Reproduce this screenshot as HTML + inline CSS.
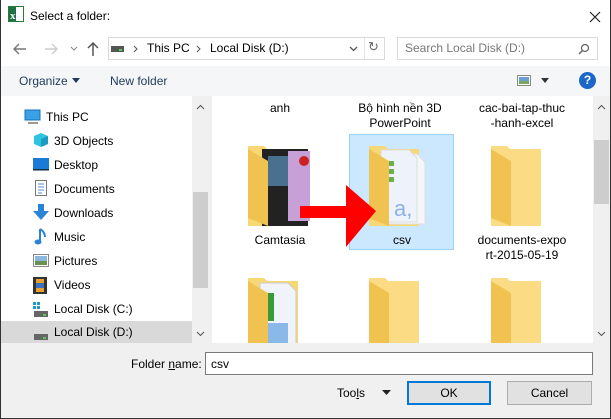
<!DOCTYPE html>
<html><head><meta charset="utf-8"><style>
*{margin:0;padding:0;box-sizing:border-box}
body{width:611px;height:419px;overflow:hidden;background:#fff;font-family:"Liberation Sans","Noto Sans CJK JP",sans-serif;font-size:12px;color:#000;position:relative}
.a{position:absolute}
.nav div.it{position:absolute;left:54px;height:24px;line-height:24px;font-size:12px}
.ic{position:absolute;left:33px}
.lbl{position:absolute;text-align:center;font-size:12px;line-height:15px;width:110px}
</style></head><body>
<div class="a" style="left:0;top:0;width:1px;height:419px;background:#333"></div>
<div class="a" style="right:0;top:0;width:1px;height:419px;background:#333"></div>
<!-- title -->
<svg class="a" style="left:8px;top:6px" width="16" height="16"><rect x="0.5" y="0.5" width="15" height="15" fill="#fff" stroke="#2a7a3a"/><rect x="1" y="1" width="7" height="14" fill="#1e7145"/><text x="2" y="13" font-size="11" font-weight="bold" fill="#fff" font-family="Liberation Serif">x</text></svg>
<div class="a" style="left:30px;top:9px;font-size:12px">Select a folder:</div>
<svg class="a" style="left:589px;top:11px" width="12" height="12"><path d="M1 1L11 11M11 1L1 11" stroke="#222" stroke-width="1.2"/></svg>
<!-- nav -->
<svg class="a" style="left:13px;top:43px" width="14" height="12"><path d="M13 6H2M6 1L1 6l5 5" stroke="#777" stroke-width="1.4" fill="none"/></svg>
<svg class="a" style="left:44px;top:43px" width="14" height="12"><path d="M1 6h11M8 1l5 5-5 5" stroke="#ccc" stroke-width="1.4" fill="none"/></svg>
<svg class="a" style="left:70px;top:46px" width="8" height="6"><path d="M1 1l3 3 3-3" stroke="#888" fill="none"/></svg>
<svg class="a" style="left:87px;top:41px" width="12" height="15"><path d="M6 15V2M1 7l5-5 5 5" stroke="#555" stroke-width="1.5" fill="none"/></svg>
<div class="a" style="left:108px;top:37px;width:277px;height:23px;border:1px solid #d9d9d9"></div>
<div class="a" style="left:364px;top:38px;width:1px;height:21px;background:#e5e5e5"></div>
<svg class="a" style="left:111px;top:43px" width="14" height="10"><rect x="0" y="3" width="13" height="6" fill="#555"/><rect x="8" y="6" width="3" height="2" fill="#5c5"/></svg>
<svg class="a" style="left:133px;top:45px" width="5" height="8"><path d="M1 1l3 3-3 3" stroke="#555" fill="none"/></svg>
<div class="a" style="left:147px;top:41px;font-size:12px">This PC</div>
<svg class="a" style="left:196px;top:45px" width="5" height="8"><path d="M1 1l3 3-3 3" stroke="#555" fill="none"/></svg>
<div class="a" style="left:210px;top:41px;font-size:12px">Local Disk (D:)</div>
<svg class="a" style="left:349px;top:46px" width="9" height="6"><path d="M1 1l3.5 3.5L8 1" stroke="#555" stroke-width="1.3" fill="none"/></svg>
<div class="a" style="left:368px;top:39px;font-size:13px;color:#666">↻</div>
<div class="a" style="left:397px;top:37px;width:201px;height:23px;border:1px solid #d9d9d9"></div>
<div class="a" style="left:405px;top:41px;font-size:12px;color:#777">Search Local Disk (D:)</div>
<svg class="a" style="left:578px;top:43px" width="12" height="12"><circle cx="7" cy="5" r="3.5" fill="none" stroke="#666" stroke-width="1.3"/><line x1="4.5" y1="7.5" x2="1" y2="11" stroke="#666" stroke-width="1.5"/></svg>
<!-- toolbar -->
<div class="a" style="left:1px;top:66px;width:609px;height:30px;background:#f5f6f7"></div>
<div class="a" style="left:19px;top:74px;font-size:12px;color:#1e395b">Organize</div>
<svg class="a" style="left:72px;top:78px" width="8" height="5"><path d="M0 0h8L4 5z" fill="#1e395b"/></svg>
<div class="a" style="left:110px;top:74px;font-size:12px;color:#1e395b">New folder</div>
<svg class="a" style="left:517px;top:75px" width="14" height="11"><rect x="0.5" y="0.5" width="13" height="10" fill="#fff" stroke="#888"/><rect x="2" y="2" width="10" height="7" fill="#6a9ed4"/><rect x="2" y="6" width="10" height="3" fill="#7aa860"/></svg>
<svg class="a" style="left:541px;top:78px" width="8" height="5"><path d="M0 0h8L4 5z" fill="#333"/></svg>
<div class="a" style="left:579px;top:72px;width:17px;height:17px;border-radius:50%;background:#1b66c7;color:#fff;font-weight:bold;font-size:12px;text-align:center;line-height:17px">?</div>
<!-- left pane -->
<div class="nav">
<div class="a" style="left:1px;top:321px;width:191px;height:22px;background:#d9d9d9"></div>
<div class="it" style="left:46px;top:105px">This PC</div>
<div class="it" style="top:129px">3D Objects</div>
<div class="it" style="top:153px">Desktop</div>
<div class="it" style="top:177px">Documents</div>
<div class="it" style="top:201px">Downloads</div>
<div class="it" style="top:225px">Music</div>
<div class="it" style="top:249px">Pictures</div>
<div class="it" style="top:273px">Videos</div>
<div class="it" style="top:297px">Local Disk (C:)</div>
<div class="it" style="top:320px">Local Disk (D:)</div>
</div>
<svg class="a" style="left:24px;top:109px" width="18" height="16"><rect x="1" y="1" width="15" height="10" fill="#3aa0e8" stroke="#1a70b8"/><rect x="4" y="13" width="10" height="2" fill="#999"/></svg>
<svg class="ic" style="top:132px" width="16" height="16"><polygon points="8,1 15,4 15,12 8,15 1,12 1,4" fill="#2ec4e0"/><polygon points="8,7 15,4 15,12 8,15" fill="#1a9cc0"/></svg>
<svg class="ic" style="top:157px" width="16" height="14"><rect x="0" y="1" width="16" height="11" fill="#1a7ad8"/><rect x="0" y="12" width="16" height="1.5" fill="#134"/></svg>
<svg class="ic" style="top:180px" width="16" height="18"><rect x="2.5" y="0.5" width="11" height="15" fill="#fff" stroke="#777"/><path d="M5 4h6M5 7h6M5 10h6M5 13h4" stroke="#5a8ad0"/></svg>
<svg class="ic" style="top:204px" width="16" height="18"><rect x="5" y="0" width="6" height="8" fill="#2b83d8"/><polygon points="0,7 16,7 8,16" fill="#2b83d8"/></svg>
<svg class="ic" style="top:228px" width="16" height="18"><path d="M7 1v12" stroke="#2b83d8" stroke-width="2"/><ellipse cx="5" cy="14" rx="3.5" ry="2.5" fill="#2b83d8"/><path d="M7 1q5 3 5 8" stroke="#2b83d8" fill="none" stroke-width="2"/></svg>
<svg class="ic" style="top:254px" width="16" height="14"><rect x="0.5" y="0.5" width="15" height="12" fill="#fff" stroke="#888"/><rect x="2" y="2" width="12" height="9" fill="#8ab8e0"/><rect x="2" y="7" width="12" height="4" fill="#6a9050"/></svg>
<svg class="ic" style="top:277px" width="14" height="17"><rect x="0" y="0" width="14" height="17" fill="#333"/><rect x="3" y="2" width="8" height="13" fill="#e8a030"/><rect x="3" y="6" width="8" height="5" fill="#3a70c0"/></svg>
<svg class="ic" style="top:302px" width="16" height="16"><rect x="0" y="0" width="3" height="3" fill="#29c"/><rect x="4" y="0" width="3" height="3" fill="#29c"/><rect x="0" y="4" width="3" height="3" fill="#29c"/><rect x="4" y="4" width="3" height="3" fill="#29c"/><rect x="1" y="9" width="14" height="6" fill="#666"/><rect x="10" y="12" width="3" height="2" fill="#5c5"/></svg>
<svg class="ic" style="top:325px" width="16" height="16"><rect x="1" y="9" width="14" height="6" fill="#666"/><rect x="10" y="12" width="3" height="2" fill="#5c5"/></svg>
<!-- left scrollbar -->
<div class="a" style="left:192px;top:96px;width:17px;height:247px;background:#f0f0f0"></div>
<div class="a" style="left:193px;top:192px;width:15px;height:96px;background:#cdcdcd"></div>
<svg class="a" style="left:196px;top:104px" width="9" height="6"><path d="M1 5l3.5-3.5L8 5" stroke="#555" fill="none"/></svg>
<svg class="a" style="left:196px;top:331px" width="9" height="6"><path d="M1 1l3.5 3.5L8 1" stroke="#555" fill="none"/></svg>
<div class="a" style="left:209px;top:96px;width:3px;height:247px;background:#f0f0f0"></div>
<!-- right pane -->
<div class="a" style="left:349px;top:134px;width:105px;height:116px;background:#cce8ff;border:1px solid #99d1ff"></div>
<div class="lbl" style="left:225px;top:101px">anh</div>
<div class="lbl" style="left:345px;top:101px">Bộ hình nền 3D<br>PowerPoint</div>
<div class="lbl" style="left:467px;top:101px">cac-bai-tap-thuc<br>-hanh-excel</div>
<div class="lbl" style="left:225px;top:233px">Camtasia</div>
<div class="lbl" style="left:347px;top:233px">csv</div>
<div class="lbl" style="left:467px;top:233px">documents-expo<br>rt-2015-05-19</div>
<!-- folders -->
<svg class="a" style="left:248px;top:146px" width="65" height="82">
<path d="M0 0h16l3 3h31v77H0z" fill="#f8d775"/>
<rect x="14" y="3" width="46" height="77" fill="#222"/><rect x="40" y="5" width="22" height="70" fill="#c8a0d8"/><rect x="20" y="10" width="20" height="30" fill="#4a7090"/><circle cx="56" cy="15" r="5" fill="#c22"/>
<polygon points="0,3 20,15 20,80 0,72" fill="#f0c350"/>
</svg>
<svg class="a" style="left:369px;top:146px" width="62" height="82">
<path d="M0 0h16l3 3h31v77H0z" fill="#f8d775"/>
<path d="M18 8h30l8 8v62H18z" fill="#f4f6fa" stroke="#ddd"/><path d="M12 4h28l8 8v64H12z" fill="#eef2fa" stroke="#ddd"/>
<rect x="19" y="15" width="6" height="5" fill="#6ab04c"/><rect x="19" y="23" width="6" height="5" fill="#6ab04c"/><rect x="19" y="31" width="6" height="5" fill="#6ab04c"/>
<text x="25" y="70" font-size="22" fill="#8ab0e8" font-family="Liberation Sans">a,</text>
<polygon points="0,3 20,15 20,80 0,72" fill="#f0c350"/>
</svg>
<svg class="a" style="left:491px;top:146px" width="52" height="82">
<path d="M0 0h16l3 3h31v77H0z" fill="#fbdc85"/>
<polygon points="0,3 20,15 20,80 0,72" fill="#f0c350"/>
</svg>
<!-- red arrow -->
<svg class="a" style="left:300px;top:185px" width="80" height="65"><rect x="0" y="21" width="48" height="12" fill="#f00"/><polygon points="46,0 76,26 46,62" fill="#f00"/></svg>
<!-- row 3 folders -->
<svg class="a" style="left:248px;top:278px" width="65" height="66"><path d="M0 0h16l3 3h31v63H0z" fill="#f8d775"/><path d="M12 5h28l8 8v53H12z" fill="#f0f4fa" stroke="#ccc"/><rect x="18" y="15" width="8" height="28" fill="#3a9a3a"/><rect x="20" y="45" width="20" height="21" fill="#8ab8e8"/><polygon points="0,3 20,15 20,66 0,66" fill="#f0c350"/></svg>
<svg class="a" style="left:369px;top:278px" width="52" height="66"><path d="M0 0h16l3 3h31v63H0z" fill="#fbdc85"/><polygon points="0,3 20,15 20,66 0,66" fill="#f0c350"/></svg>
<svg class="a" style="left:491px;top:278px" width="52" height="66"><path d="M0 0h16l3 3h31v63H0z" fill="#fbdc85"/><polygon points="0,3 20,15 20,66 0,66" fill="#f0c350"/></svg>
<!-- right scrollbar -->
<div class="a" style="left:593px;top:96px;width:17px;height:247px;background:#f0f0f0"></div>
<div class="a" style="left:594px;top:140px;width:15px;height:64px;background:#cdcdcd"></div>
<svg class="a" style="left:597px;top:104px" width="9" height="6"><path d="M1 5l3.5-3.5L8 5" stroke="#555" fill="none"/></svg>
<svg class="a" style="left:597px;top:331px" width="9" height="6"><path d="M1 1l3.5 3.5L8 1" stroke="#555" fill="none"/></svg>
<!-- bottom -->
<div class="a" style="left:1px;top:343px;width:609px;height:76px;background:#f0f0f0"></div>
<div class="a" style="left:0;top:418px;width:611px;height:1px;background:#333"></div>
<div class="a" style="left:131px;top:357px;font-size:12px">Folder <u>n</u>ame:</div>
<div class="a" style="left:205px;top:352px;width:388px;height:23px;background:#fff;border:1px solid #7a7a7a"></div>
<div class="a" style="left:211px;top:357px;font-size:12px">csv</div>
<div class="a" style="left:337px;top:386px;font-size:12px">Too<u>l</u>s</div>
<svg class="a" style="left:382px;top:390px" width="9" height="5"><path d="M0 0h9L4.5 5z" fill="#222"/></svg>
<div class="a" style="left:407px;top:381px;width:84px;height:24px;background:#e1e1e1;border:2px solid #0078d7;text-align:center;line-height:20px;font-size:12px">OK</div>
<div class="a" style="left:507px;top:381px;width:85px;height:24px;background:#e1e1e1;border:1px solid #adadad;text-align:center;line-height:22px;font-size:12px">Cancel</div>
</body></html>
